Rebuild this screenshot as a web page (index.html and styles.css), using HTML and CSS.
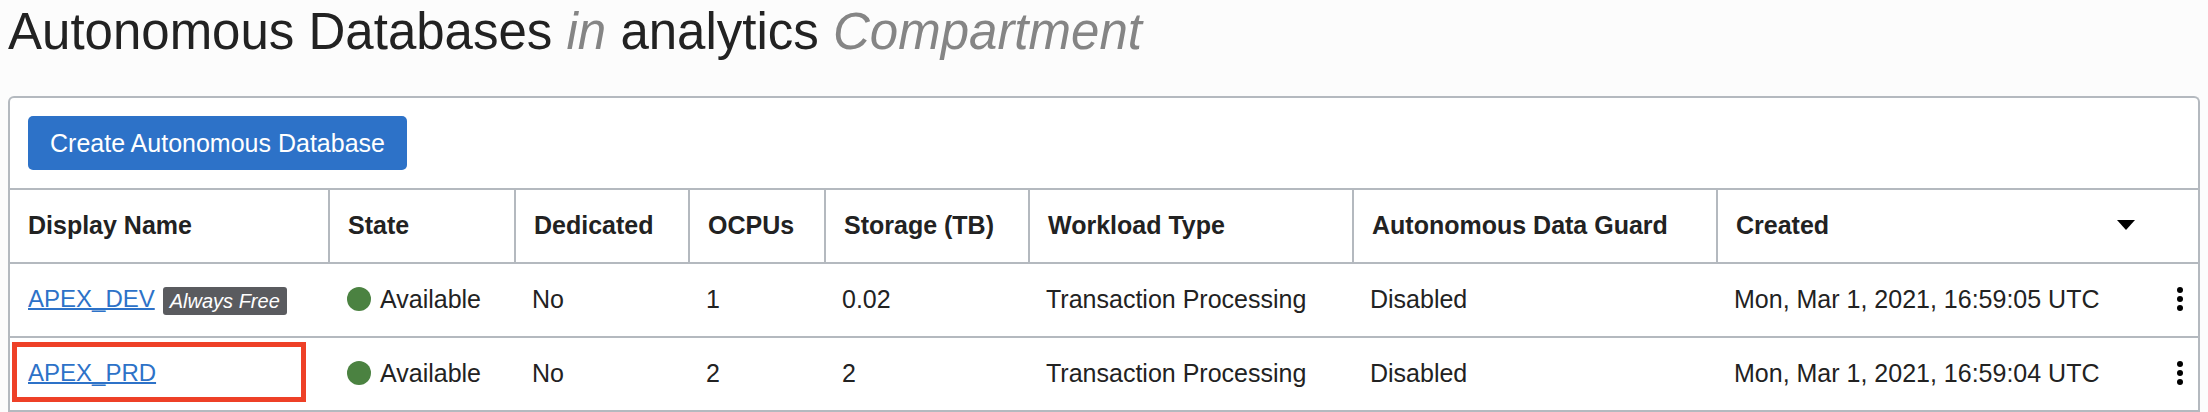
FILE: index.html
```html
<!DOCTYPE html>
<html lang="en">
<head>
<meta charset="utf-8">
<title>Autonomous Databases</title>
<link rel="stylesheet" href="styles.css">
</head>
<body>
<main class="page">
  <h1 class="title">Autonomous Databases <em>in</em> analytics <em>Compartment</em></h1>
  <section class="panel">
    <div class="toolbar">
      <button class="create" type="button">Create Autonomous Database</button>
    </div>
    <table class="grid">
      <colgroup>
        <col class="c-name"><col class="c-state"><col class="c-dedicated"><col class="c-ocpus"><col class="c-storage"><col class="c-workload"><col class="c-guard"><col class="c-created"><col class="c-actions">
      </colgroup>
      <thead>
        <tr>
          <th scope="col">Display Name</th>
          <th scope="col">State</th>
          <th scope="col">Dedicated</th>
          <th scope="col">OCPUs</th>
          <th scope="col">Storage (TB)</th>
          <th scope="col">Workload Type</th>
          <th scope="col">Autonomous Data Guard</th>
          <th scope="col" colspan="2" aria-sort="descending">
            <div class="sorted">Created
              <svg class="arrow" viewBox="0 0 18 10" aria-hidden="true"><path d="M0 0H18L9 10Z"/></svg>
            </div>
          </th>
        </tr>
      </thead>
      <tbody>
        <tr>
          <td><div class="name"><a href="#dev">APEX_DEV</a><span class="badge">Always Free</span></div></td>
          <td><div class="state"><span class="dot"></span>Available</div></td>
          <td>No</td>
          <td>1</td>
          <td>0.02</td>
          <td>Transaction Processing</td>
          <td>Disabled</td>
          <td>Mon, Mar 1, 2021, 16:59:05 UTC</td>
          <td class="actions"><button class="kebab" type="button" aria-label="Actions for APEX_DEV"><svg viewBox="0 0 6 28" aria-hidden="true"><circle cx="3" cy="5" r="3"/><circle cx="3" cy="14" r="3"/><circle cx="3" cy="23" r="3"/></svg></button></td>
        </tr>
        <tr>
          <td class="marked"><div class="name"><a href="#prd">APEX_PRD</a></div></td>
          <td><div class="state"><span class="dot"></span>Available</div></td>
          <td>No</td>
          <td>2</td>
          <td>2</td>
          <td>Transaction Processing</td>
          <td>Disabled</td>
          <td>Mon, Mar 1, 2021, 16:59:04 UTC</td>
          <td class="actions"><button class="kebab" type="button" aria-label="Actions for APEX_PRD"><svg viewBox="0 0 6 28" aria-hidden="true"><circle cx="3" cy="5" r="3"/><circle cx="3" cy="14" r="3"/><circle cx="3" cy="23" r="3"/></svg></button></td>
        </tr>
      </tbody>
    </table>
  </section>
</main>
</body>
</html>
```
FILE: styles.css
```css
* { box-sizing: border-box; }

body {
  margin: 0;
  background: #fcfcfc;
  color: #222;
  font: 25px/32px "Liberation Sans", Helvetica, Arial, sans-serif;
}

.page { padding: 0 8px; }

.title {
  margin: 0 0 32px;
  font-size: 51px;
  font-weight: 400;
  line-height: 64px;
}
.title em { color: #858585; }

.panel {
  background: #fff;
  border: 2px solid #b4b9bf;
  border-bottom: 0;
  border-radius: 6px 6px 0 0;
}

.toolbar { padding: 18px; }

.create {
  display: block;
  height: 54px;
  padding: 0 22px;
  border: 0;
  border-radius: 5px;
  background: #2d72c8;
  color: #fff;
  font: inherit;
}

.grid {
  width: 100%;
  table-layout: fixed;
  border-spacing: 0;
  text-align: left;
}
.c-name { width: 318px; }
.c-state { width: 186px; }
.c-dedicated { width: 174px; }
.c-ocpus { width: 136px; }
.c-storage { width: 204px; }
.c-workload { width: 324px; }
.c-guard { width: 364px; }
.c-actions { width: 62px; }

th, td {
  height: 74px;
  padding: 0 0 2px 18px;
  border-bottom: 2px solid #b4b9bf;
  white-space: nowrap;
}
th { border-left: 2px solid #b4b9bf; }
th:first-child { border-left: 0; }
thead th { height: 76px; border-top: 2px solid #b4b9bf; }

.sorted {
  display: flex;
  align-items: center;
  justify-content: space-between;
  padding-right: 63px;
}
.arrow { width: 18px; height: 10px; fill: #000; }

.name, .state { display: flex; align-items: center; }
.name { gap: 8px; }
.state { gap: 9px; padding-left: 1px; }

a {
  color: #2d72c8;
  font-size: 24px;
  text-decoration: underline;
  text-decoration-thickness: 2px;
  text-decoration-skip-ink: none;
}

.badge {
  margin-top: 4px;
  padding: 0 7px;
  border-radius: 3px;
  background: #5a5b5f;
  color: #fff;
  font-size: 20px;
  font-style: italic;
  line-height: 28px;
}

.dot {
  width: 24px;
  height: 24px;
  border-radius: 50%;
  background: #4b8241;
}

.marked { position: relative; }
.marked::after {
  content: "";
  position: absolute;
  inset: 4px 22px 8px 2px;
  border: 5px solid #ee4027;
}

td.actions { padding: 0 15px 2px 0; }
.kebab {
  display: block;
  margin-left: auto;
  padding: 0;
  border: 0;
  background: none;
}
.kebab svg { display: block; width: 6px; height: 28px; fill: #000; }
```
